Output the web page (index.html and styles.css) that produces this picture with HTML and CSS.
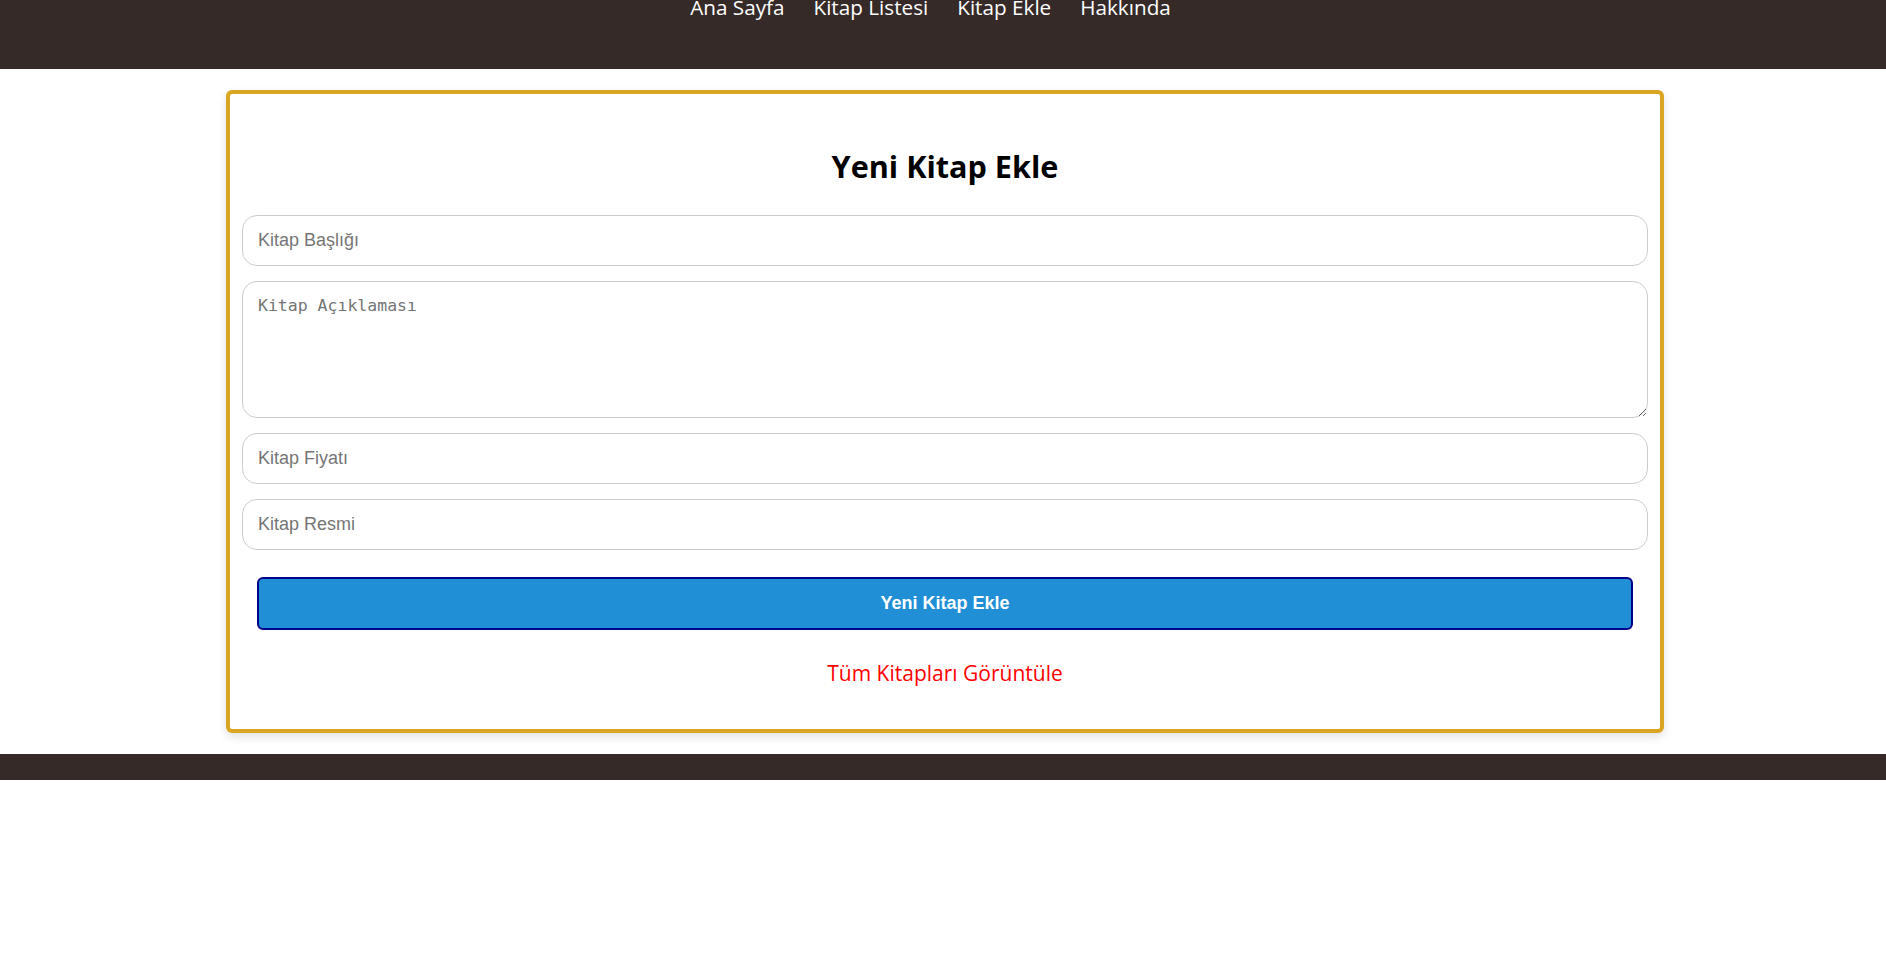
FILE: index.html
```html
<!DOCTYPE html>
<html lang="tr">
<head>
<meta charset="utf-8">
<title>Yeni Kitap Ekle</title>
<link rel="stylesheet" href="styles.css">
</head>
<body>
<header class="site-header">
  <nav class="main-nav">
    <a href="#" class="nav-link">Ana Sayfa</a>
    <a href="#" class="nav-link">Kitap Listesi</a>
    <a href="#" class="nav-link">Kitap Ekle</a>
    <a href="#" class="nav-link">Hakkında</a>
  </nav>
</header>
<main class="page">
  <section class="card">
    <h2 class="card-title">Yeni Kitap Ekle</h2>
    <form class="book-form">
      <input class="field" type="text" placeholder="Kitap Başlığı">
      <textarea class="field field-area" placeholder="Kitap Açıklaması"></textarea>
      <input class="field" type="text" placeholder="Kitap Fiyatı">
      <input class="field" type="text" placeholder="Kitap Resmi">
      <button class="submit-btn" type="button">Yeni Kitap Ekle</button>
    </form>
    <a href="#" class="all-link">Tüm Kitapları Görüntüle</a>
  </section>
</main>
<footer class="site-footer"></footer>
</body>
</html>
```

FILE: styles.css
```css
* { box-sizing: border-box; }

html, body {
  margin: 0;
  padding: 0;
  background: #ffffff;
  font-family: "Open Sans", "Noto Sans", sans-serif;
}

.site-header {
  height: 69px;
  background: #352a28;
  overflow: hidden;
}

.main-nav {
  display: flex;
  justify-content: center;
  gap: 29px;
  padding-right: 25px;
  margin-top: -6px;
  line-height: 26px;
}

.nav-link {
  color: #ffffff;
  text-decoration: none;
  font-size: 20.7px;
}

.page {
  padding: 21px 0 21px 4px;
}

.card {
  width: 1438px;
  margin: 0 auto;
  border: 4px solid #daa520;
  border-radius: 6px;
  background: #ffffff;
  box-shadow: 0 4px 10px rgba(0, 0, 0, 0.12);
  padding: 0 12px 41px;
  display: flex;
  flex-direction: column;
  align-items: stretch;
}

.card-title {
  margin: 0;
  padding-top: 52px;
  margin-bottom: 29px;
  line-height: 40px;
  font-size: 30.6px;
  font-weight: 700;
  text-align: center;
  color: #000000;
}

.book-form {
  display: flex;
  flex-direction: column;
  gap: 15px;
}

.field {
  display: block;
  width: 100%;
  height: 51px;
  border: 1px solid #cccccc;
  border-radius: 15px;
  padding: 0 15px;
  font-family: "Liberation Sans", Arial, sans-serif;
  font-size: 18px;
  color: #333;
  background: #fff;
  outline: none;
}

.field::placeholder { color: #757575; }

.field-area {
  height: 137px;
  padding: 14px 15px;
  font-family: "DejaVu Sans Mono", "Liberation Mono", monospace;
  font-size: 16.5px;
  resize: vertical;
}

.submit-btn {
  margin: 12px 15px 0;
  height: 53px;
  background: #208fd6;
  border: 2px solid #00008b;
  border-radius: 6px;
  color: #ffffff;
  font-family: "Liberation Sans", Arial, sans-serif;
  font-size: 18px;
  font-weight: 700;
}

.all-link {
  display: block;
  margin-top: 28px;
  line-height: 30px;
  text-align: center;
  color: #ff0000;
  font-size: 21px;
  text-decoration: none;
}

.site-footer {
  height: 26px;
  background: #352a28;
}
```
